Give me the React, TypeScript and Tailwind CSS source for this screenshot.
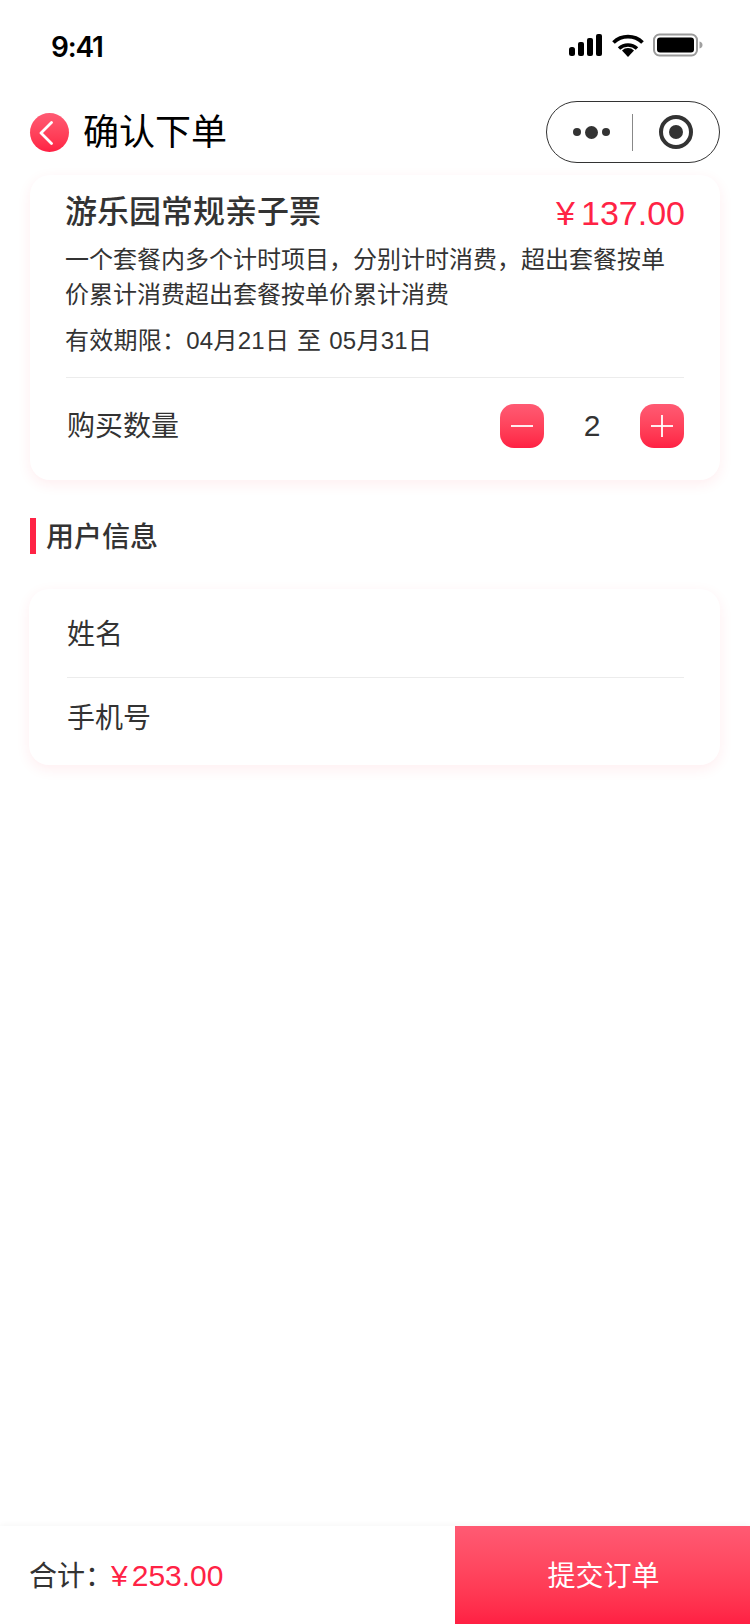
const font = "font-['Liberation_Sans','Noto_Sans_CJK_SC',sans-serif]";

function StatusIcons() {
  return (
    <div className="-mt-[4px] flex items-center gap-[8px]">
      {/* signal */}
      <svg width="34" height="22" viewBox="0 0 34 22">
        <rect x="0" y="13" width="6" height="9" rx="2.5" fill="#000" />
        <rect x="9" y="8" width="6" height="14" rx="2" fill="#000" />
        <rect x="18" y="4" width="6" height="18" rx="2" fill="#000" />
        <rect x="27" y="0" width="6" height="22" rx="2" fill="#000" />
      </svg>
      {/* wifi */}
      <svg width="34" height="26" viewBox="0 0 34 26">
        <path d="M17 25l-6-6.600a9 9 0 0 1 12 0z" fill="#000" />
        <path d="M2.500 10.500a21 21 0 0 1 29 0" fill="none" stroke="#000" strokeWidth="3.8" />
        <path d="M8 16.500a13.500 13.500 0 0 1 18 0" fill="none" stroke="#000" strokeWidth="3.6" />
      </svg>
      {/* battery */}
      <svg width="50" height="24" viewBox="0 0 50 24">
        <rect x="1" y="1.500" width="43" height="21" rx="5.500" fill="none" stroke="#9a9a9a" strokeWidth="2" />
        <rect x="4" y="4.500" width="37" height="15" rx="3" fill="#000" />
        <path d="M46.500 8.500c2 .6 3 1.800 3 3.500s-1 2.900-3 3.500z" fill="#a0a0a0" />
      </svg>
    </div>
  );
}

function Stepper({ kind }: { kind: "minus" | "plus" }) {
  return (
    <button className="flex h-[44px] w-[44px] items-center justify-center rounded-[14px] bg-gradient-to-b from-[#ff5a73] to-[#ff1f43]">
      <svg width="24" height="24" viewBox="0 0 24 24">
        <path d="M1 12h22" stroke="#fff" strokeWidth="1.8" />
        {kind === "plus" && <path d="M12 1v22" stroke="#fff" strokeWidth="1.8" />}
      </svg>
    </button>
  );
}

export default function App() {
  return (
    <div className={`${font} flex h-[1624px] w-[750px] flex-col overflow-hidden bg-white text-[#333]`}>
      {/* status bar */}
      <div className="flex h-[88px] shrink-0 items-center justify-between pl-[51px] pr-[47px] pt-[5px]">
        <span className="font-['Inter'] text-[28px] font-semibold leading-none tracking-[-1.2px] text-black">9:41</span>
        <StatusIcons />
      </div>

      {/* nav */}
      <div className="flex h-[87px] shrink-0 items-start justify-between pl-[30px] pr-[30px] pt-[13px]">
        <div className="flex items-center gap-[14px] pt-[12px]">
          <span className="flex h-[39px] w-[39px] items-center justify-center rounded-full bg-gradient-to-b from-[#ff5a73] to-[#ff1f43] pr-[7px]">
            <svg width="14" height="24" viewBox="0 0 14 24">
              <path d="M12.500 1.500 2 12l10.500 10.500" fill="none" stroke="#fff" strokeWidth="2.8" strokeLinecap="round" strokeLinejoin="round" />
            </svg>
          </span>
          <h1 className="text-[36px] font-normal leading-[39px] text-black">确认下单</h1>
        </div>
        <div className="flex h-[62px] w-[174px] items-center rounded-full border border-[#333]">
          <div className="flex w-[85px] items-center justify-center gap-[4px] pl-[3px]">
            <span className="h-[8px] w-[8px] rounded-full bg-[#333]" />
            <span className="h-[13px] w-[13px] rounded-full bg-[#333]" />
            <span className="h-[8px] w-[8px] rounded-full bg-[#333]" />
          </div>
          <div className="h-[37px] w-px bg-[#888]" />
          <div className="flex flex-1 items-center justify-center">
            <span className="flex h-[34px] w-[34px] items-center justify-center rounded-full border-[4px] border-[#333]">
              <span className="h-[14px] w-[14px] rounded-full bg-[#333]" />
            </span>
          </div>
        </div>
      </div>

      {/* ticket card */}
      <div className="mx-[30px] h-[305px] shrink-0 rounded-[20px] bg-white pl-[35px] pr-[35px] pt-[11px] shadow-[0_4px_14px_rgba(255,40,70,0.08)]">
        <div className="flex items-center justify-between">
          <h2 className="text-[32px] font-medium leading-[48px]">游乐园常规亲子票</h2>
          <span className="flex pt-[3px] text-[34px] leading-[48px] text-[#ff2345]">
            <span>¥</span>
            <span className="ml-[6px]">137.00</span>
          </span>
        </div>
        <p className="mt-[5px] w-[610px] text-[24px] leading-[35px]">
          一个套餐内多个计时项目，分别计时消费，超出套餐按单价累计消费超出套餐按单价累计消费
        </p>
        <p className="mt-[11px] text-[24px] leading-[36px] tracking-[0.25px] [word-spacing:1px]">有效期限：04月21日 至 05月31日</p>
        <div className="ml-[1px] mr-[1px] mt-[18px] border-t border-[#ececec]" />
        <div className="flex h-[96px] items-center justify-between pl-[2px] pr-[1px]">
          <span className="pt-[2px] text-[28px]">购买数量</span>
          <div className="flex items-center">
            <Stepper kind="minus" />
            <span className="w-[96px] pb-[1px] text-center text-[30px]">2</span>
            <Stepper kind="plus" />
          </div>
        </div>
      </div>

      {/* section title */}
      <div className="mx-[30px] mt-[38px] flex h-[36px] shrink-0 items-center gap-[10px]">
        <span className="h-[36px] w-[6px] bg-[#ff2345]" />
        <h3 className="pt-[3px] text-[28px] font-medium leading-[36px]">用户信息</h3>
      </div>

      {/* user info */}
      <div className="ml-[29px] mr-[30px] mt-[35px] shrink-0 rounded-[20px] bg-white pl-[38px] pr-[36px] shadow-[0_4px_14px_rgba(255,40,70,0.08)]">
        <div className="flex h-[89px] items-center border-b border-[#ececec] pt-[3px] text-[28px]">姓名</div>
        <div className="flex h-[87px] items-center pb-[5px] text-[28px]">手机号</div>
      </div>

      {/* bottom bar */}
      <div className="mt-auto flex h-[98px] shrink-0 items-center shadow-[0_-1px_6px_rgba(0,0,0,0.04)]">
        <div className="flex flex-1 items-center pl-[29px] text-[28px]">
          <span className="pt-[3px]">合计：</span>
          <span className="-ml-[2px] flex text-[30px] text-[#ff2345]">
            <span>¥</span>
            <span className="ml-[4px]">253.00</span>
          </span>
        </div>
        <button className="flex h-full w-[295px] items-center justify-center bg-gradient-to-b from-[#ff5a73] to-[#ff1f43] pl-[2px] pt-[3px] text-[28px] text-white">
          提交订单
        </button>
      </div>
    </div>
  );
}
